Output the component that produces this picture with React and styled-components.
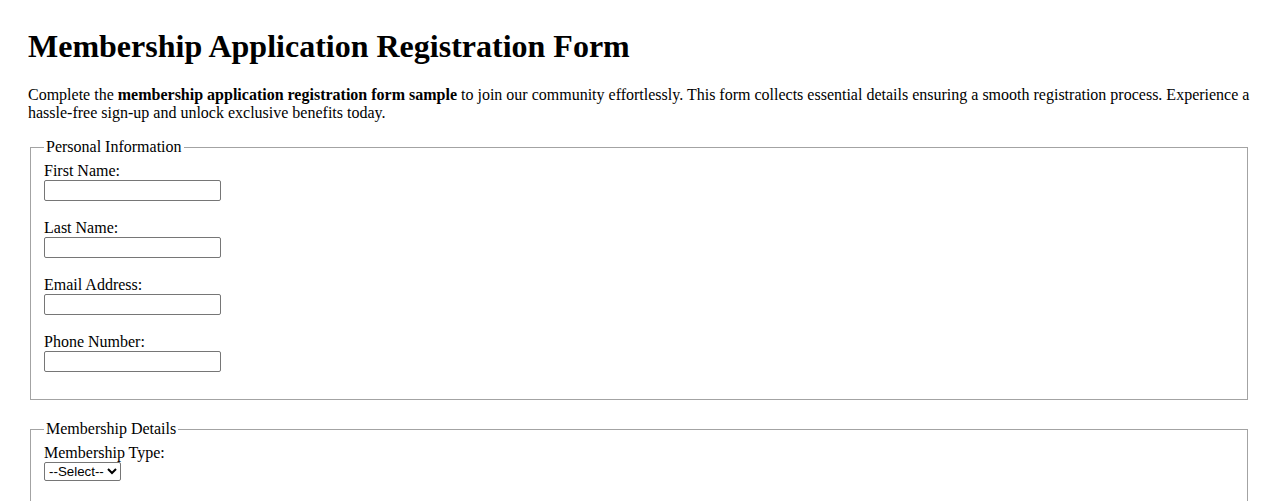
import React from "react";
import styled, { createGlobalStyle } from "styled-components";

const GlobalStyle = createGlobalStyle`
  body {
    margin: 28px;
    background: #ffffff;
    color: #000000;
    font-family: "Liberation Serif", "Times New Roman", serif;
    font-size: 16px;
  }
`;

const Title = styled.h1`
  font-size: 32px;
  font-weight: bold;
  margin: 0 0 21px;
`;

const Intro = styled.p`
  margin: 0 0 16px;
  line-height: normal;
`;

// light single-line frame around each group of fields
const Section = styled.fieldset`
  margin: ${({ $spaced }) => ($spaced ? "20px 2px 0" : "0 2px")};
  padding: 6px 13px 9px;
  border: 1px solid #a3a3a3;
  min-height: ${({ $minHeight }) => $minHeight || "auto"};
`;

const Legend = styled.legend`
  padding: 0 2px;
`;

const Field = styled.div`
  display: flex;
  flex-direction: column;
  align-items: flex-start;
  margin-bottom: 18px;
`;

const Label = styled.label`
  display: block;
  line-height: 18px;
`;

const TextInput = styled.input`
  box-sizing: border-box;
  width: 177px;
  height: 21px;
  margin: 0;
  padding: 1px 2px;
  border: 1px solid #767676;
  border-radius: 2px;
  font-family: "Liberation Sans", Arial, sans-serif;
  font-size: 13.33px;
`;

const Select = styled.select`
  box-sizing: border-box;
  height: 19px;
  margin: 0;
  border: 1px solid #767676;
  border-radius: 2px;
  font-family: "Liberation Sans", Arial, sans-serif;
  font-size: 13.33px;
  color: #000;
  background: #fff;
`;

const personalFields = [
  { id: "firstName", label: "First Name:", type: "text" },
  { id: "lastName", label: "Last Name:", type: "text" },
  { id: "email", label: "Email Address:", type: "email" },
  { id: "phone", label: "Phone Number:", type: "tel" },
];

export default function App() {
  return (
    <>
      <GlobalStyle />
      <Title>Membership Application Registration Form</Title>
      <Intro>
        Complete the <strong>membership application registration form sample</strong> to
        join our community effortlessly. This form collects essential details ensuring a
        smooth registration process. Experience a hassle-free sign-up and unlock exclusive
        benefits today.
      </Intro>

      <form>
        <Section>
          <Legend>Personal Information</Legend>
          {personalFields.map((f) => (
            <Field key={f.id}>
              <Label htmlFor={f.id}>{f.label}</Label>
              <TextInput id={f.id} name={f.id} type={f.type} />
            </Field>
          ))}
        </Section>

        <Section $spaced $minHeight="120px">
          <Legend>Membership Details</Legend>
          <Field>
            <Label htmlFor="membershipType">Membership Type:</Label>
            <Select id="membershipType" name="membershipType" defaultValue="">
              <option value="">--Select--</option>
              <option value="basic">Basic</option>
              <option value="premium">Premium</option>
              <option value="vip">VIP</option>
            </Select>
          </Field>
        </Section>
      </form>
    </>
  );
}
